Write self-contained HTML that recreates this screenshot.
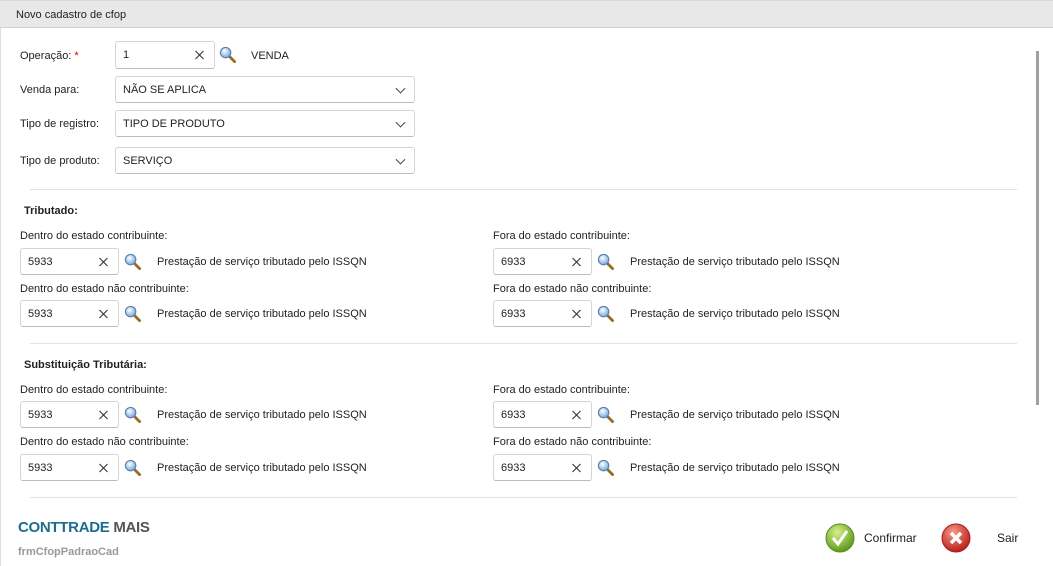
<!DOCTYPE html><html><head><style>
body{margin:0;width:1053px;height:566px;background:#fff;font-family:"Liberation Sans",sans-serif;font-size:11px;color:#222;position:relative;overflow:hidden}
.a{position:absolute;white-space:nowrap}
.in{position:absolute;border:1px solid #d4d4d4;border-bottom-color:#bbb;border-radius:3px;background:#fff;box-sizing:border-box}
.in span{position:absolute;left:7px;top:50%;transform:translateY(-50%)}
.x{position:absolute;right:10px;top:50%;transform:translateY(-50%);width:9px;height:9px}
.chev{position:absolute;right:10px;top:50%;width:6px;height:6px;border-right:1.2px solid #444;border-bottom:1.2px solid #444;transform:translateY(-70%) rotate(45deg)}
.hr{position:absolute;left:30px;width:987px;height:1px;background:#e2e2e2}
</style></head><body>
<svg width="0" height="0" style="position:absolute"><defs>
<radialGradient id="lg" cx="40%" cy="35%" r="60%"><stop offset="0" stop-color="#fff"/><stop offset="1" stop-color="#7fb0e0"/></radialGradient>
<symbol id="mag" viewBox="0 0 18 18"><line x1="11" y1="11" x2="16.5" y2="16.5" stroke="#9a6a2a" stroke-width="3" stroke-linecap="round"/><circle cx="7" cy="7" r="5.5" fill="url(#lg)" stroke="#5a7fa9" stroke-width="1.2"/></symbol>
<symbol id="xx" viewBox="0 0 9 9"><path d="M0.5 0.5l8 8M8.5 0.5l-8 8" stroke="#333" stroke-width="1.1"/></symbol>
</defs></svg>
<div class="a" style="left:0;top:0;width:1053px;height:28px;background:#e8e8e8;border-bottom:1px solid #d0d0d0;border-top:1px solid #d8d8d8;box-sizing:border-box"></div>
<div class="a" style="left:16px;top:9px">Novo cadastro de cfop</div>
<div class="a" style="left:0;top:28px;width:1px;height:538px;background:#ddd"></div>
<div class="a" style="left:1036px;top:51px;width:3px;height:354px;background:#a0a0a0"></div>

<div class="a" style="left:20px;top:50px">Operação: <span style="color:#d00">*</span></div>
<div class="in" style="left:115px;top:41px;width:100px;height:28px"><span>1</span><svg class="x"><use href="#xx"/></svg></div>
<svg class="a" style="left:219px;top:46px" width="17" height="17"><use href="#mag"/></svg>
<div class="a" style="left:251px;top:50px">VENDA</div>

<div class="a" style="left:20px;top:84px">Venda para:</div>
<div class="in" style="left:115px;top:76px;width:300px;height:27px"><span>NÃO SE APLICA</span><i class="chev"></i></div>
<div class="a" style="left:20px;top:118px">Tipo de registro:</div>
<div class="in" style="left:115px;top:110px;width:300px;height:27px"><span>TIPO DE PRODUTO</span><i class="chev"></i></div>
<div class="a" style="left:20px;top:155px">Tipo de produto:</div>
<div class="in" style="left:115px;top:147px;width:300px;height:27px"><span>SERVIÇO</span><i class="chev"></i></div>

<div class="hr" style="top:189px"></div>
<div class="a" style="left:24px;top:205px;font-weight:bold">Tributado:</div>
<div class="hr" style="top:343px"></div>
<div class="a" style="left:24px;top:359px;font-weight:bold">Substituição Tributária:</div>
<div class="hr" style="top:497px"></div>

<div id="rows"></div>
<script>
var h='';var ys=[[230,248],[283,300],[384,401],[436,454]];
var lab=['Dentro do estado contribuinte:','Dentro do estado não contribuinte:'];
var lab2=['Fora do estado contribuinte:','Fora do estado não contribuinte:'];
ys.forEach(function(y,i){
[[20,'5933',lab],[493,'6933',lab2]].forEach(function(c){
var x=c[0];
h+='<div class="a" style="left:'+x+'px;top:'+y[0]+'px">'+c[2][i%2]+'</div>';
h+='<div class="in" style="left:'+x+'px;top:'+y[1]+'px;width:99px;height:27px"><span>'+c[1]+'</span><svg class="x"><use href="#xx"/></svg></div>';
h+='<svg class="a" style="left:'+(x+104)+'px;top:'+(y[1]+5)+'px" width="17" height="17"><use href="#mag"/></svg>';
h+='<div class="a" style="left:'+(x+137)+'px;top:'+(y[1]+8)+'px">Prestação de serviço tributado pelo ISSQN</div>';
});});
document.getElementById('rows').innerHTML=h;
</script>

<div class="a" style="left:18px;top:519px;font-size:15px;font-weight:bold;color:#1d6d8e;letter-spacing:-0.3px">CONTTRADE <span style="color:#555">MAIS</span></div>
<div class="a" style="left:18px;top:546px;font-size:11px;font-weight:bold;color:#999">frmCfopPadraoCad</div>

<svg class="a" style="left:825px;top:523px" width="30" height="30" viewBox="0 0 30 30"><defs><radialGradient id="gg" cx="40%" cy="30%" r="70%"><stop offset="0" stop-color="#d8f08a"/><stop offset="1" stop-color="#5c9a1a"/></radialGradient><radialGradient id="rg" cx="40%" cy="30%" r="70%"><stop offset="0" stop-color="#f59a8a"/><stop offset="1" stop-color="#b8201a"/></radialGradient></defs><circle cx="15" cy="15" r="14" fill="url(#gg)" stroke="#5a8a20"/><path d="M8 15l5 6 9-13" fill="none" stroke="#fff" stroke-width="3"/></svg>
<div class="a" style="left:864px;top:531px;font-size:12px">Confirmar</div>
<svg class="a" style="left:941px;top:523px" width="30" height="30" viewBox="0 0 30 30"><circle cx="15" cy="15" r="14" fill="url(#rg)" stroke="#a02020"/><path d="M10 10l10 10M20 10l-10 10" stroke="#fff" stroke-width="3.5"/></svg>
<div class="a" style="left:997px;top:531px;font-size:12px">Sair</div>
</body></html>
